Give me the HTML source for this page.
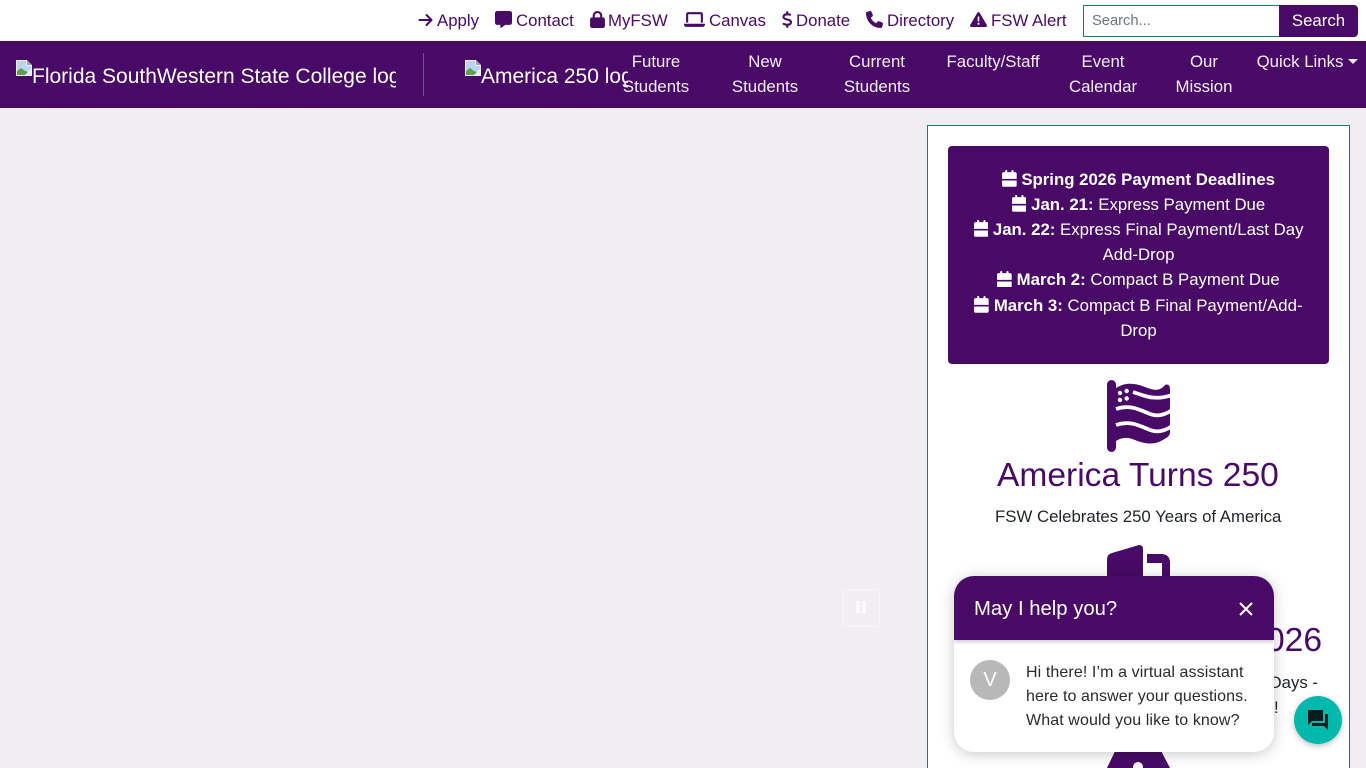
<!DOCTYPE html>
<html lang="en">
<head>
<meta charset="utf-8">
<title>Florida SouthWestern State College</title>
<style>
*{box-sizing:border-box}
html,body{margin:0;padding:0;width:1366px;height:768px;overflow:hidden;background:#f1edf3;font-family:"Liberation Sans",Arial,sans-serif;font-size:16.8px;line-height:25.2px;color:#212529}
#page{position:relative;width:1366px;height:768px;overflow:hidden;background:#f1edf3}
.a{position:absolute;white-space:nowrap}
#top{position:absolute;left:0;top:0;width:1366px;height:41px;background:#fff}
.tl{color:#480a66;top:8px;line-height:25px}
.ic{position:absolute;fill:#480a66}
#nav{position:absolute;left:0;top:41px;width:1366px;height:67px;background:#480a66}
.n{position:absolute;top:8px;color:#f5eefa;text-align:center;line-height:25.2px;white-space:nowrap;transform:translateX(-50%)}
.alt{position:absolute;top:22px;color:#fff;font-size:21px;line-height:28px;white-space:nowrap;overflow:hidden}
#panel{position:absolute;left:927px;top:125px;width:423px;height:643px;background:#fff;border:1px solid #1b7a6e;border-bottom:0}
#card{position:absolute;left:948px;top:146px;width:381px;height:218px;background:#480a66;border-radius:4px;color:#fff;text-align:center;padding:20.5px 20px 0}
#card svg{width:14.7px;height:16.8px;fill:#fff;vertical-align:-2px}
#card div{line-height:25.2px}
h2{position:absolute;margin:0;font-weight:400;font-size:33.6px;line-height:40px;color:#480a66;white-space:nowrap}
#chat{position:absolute;left:954px;top:576px;width:320px;height:176px;background:#fff;border-radius:20px;box-shadow:0 2px 14px rgba(0,0,0,.22);overflow:hidden}
#chead{position:absolute;left:0;top:0;width:320px;height:64px;background:#480a66;color:#fff;font-size:20.3px;line-height:66px;padding-left:20px;box-shadow:0 2px 4px rgba(0,0,0,.2)}
#av{position:absolute;left:16px;top:84px;width:40px;height:40px;border-radius:50%;background:#b8b8b8;color:#fff;text-align:center;line-height:40px;font-size:20px}
#msg{position:absolute;left:72px;top:85px;width:240px;font-size:16px;line-height:24px;color:#2a2a2a;letter-spacing:.1px;white-space:nowrap}
#fab{position:absolute;left:1294px;top:696px;width:48px;height:48px;border-radius:50%;background:#00b8ab;box-shadow:0 2px 6px rgba(0,0,0,.25)}
#pause{position:absolute;left:843px;top:589px;width:37px;height:38px;border:1px solid #f8f6f9;border-radius:3px}
</style>
</head>
<body>
<div id="page">
<div id="top">
  <svg class="ic" style="left:418px;top:12px;width:15px;height:16px" viewBox="0 0 448 512"><path d="M438.6 278.6c12.5-12.5 12.5-32.8 0-45.3l-160-160c-12.5-12.5-32.8-12.5-45.3 0s-12.5 32.8 0 45.3L338.8 224 32 224c-17.7 0-32 14.3-32 32s14.3 32 32 32l306.7 0L233.4 393.4c-12.5 12.5-12.5 32.8 0 45.3s32.8 12.5 45.3 0l160-160z"/></svg>
  <span class="a tl" style="left:437px">Apply</span>
  <svg class="ic" style="left:495px;top:11px;width:17px;height:17px" viewBox="0 0 512 512"><path d="M64 0C28.7 0 0 28.7 0 64V352c0 35.3 28.7 64 64 64h96v80c0 6.1 3.4 11.6 8.8 14.3s11.9 2.1 16.8-1.5L309.3 416H448c35.3 0 64-28.7 64-64V64c0-35.3-28.7-64-64-64H64z"/></svg>
  <span class="a tl" style="left:516px">Contact</span>
  <svg class="ic" style="left:590px;top:11px;width:15px;height:17px" viewBox="0 0 448 512"><path d="M144 144v48H304V144c0-44.2-35.8-80-80-80s-80 35.8-80 80zM80 192V144C80 64.5 144.5 0 224 0s144 64.5 144 144v48h16c35.3 0 64 28.7 64 64V448c0 35.3-28.7 64-64 64H64c-35.3 0-64-28.7-64-64V256c0-35.3 28.7-64 64-64H80z"/></svg>
  <span class="a tl" style="left:608px">MyFSW</span>
  <svg class="ic" style="left:684px;top:11px;width:21px;height:17px" viewBox="0 0 640 512"><path d="M128 32C92.7 32 64 60.7 64 96V352h64V96H512V352h64V96c0-35.3-28.7-64-64-64H128zM19.2 384C8.6 384 0 392.6 0 403.2C0 445.6 34.4 480 76.8 480H563.2c42.4 0 76.8-34.4 76.8-76.8c0-10.6-8.6-19.2-19.2-19.2H19.2z"/></svg>
  <span class="a tl" style="left:709px">Canvas</span>
  <svg class="ic" style="left:782px;top:11px;width:10.5px;height:17px" viewBox="0 0 320 512"><path d="M160 0c17.7 0 32 14.3 32 32V67.7c1.6 .2 3.1 .4 4.7 .7c10.6 1.6 42.1 6.7 55.1 10c17.1 4.3 27.5 21.7 23.2 38.9s-21.7 27.5-38.9 23.2c-9.3-2.4-37.6-7-48.9-8.7c-32.1-4.8-59.6-2.4-78.5 4.9c-18.3 7-25.9 16.9-27.9 28c-1.9 10.7-.5 16.7 1.2 20.4c1.8 3.9 5.5 8.3 12.8 13.2c16.3 10.7 41.3 17.7 73.7 26.3l2.9 .8c28.6 7.6 63.6 16.8 89.6 33.8c14.2 9.3 27.6 21.9 35.9 39.5c8.5 17.9 10.3 37.9 6.4 59.2c-6.9 38-33.1 63.4-65.6 76.7c-13.7 5.6-28.6 9.2-44.4 11V480c0 17.7-14.3 32-32 32s-32-14.3-32-32V445.1c-.4-.1-.9-.1-1.3-.2l-.2 0 0 0c-24.4-3.8-64.5-14.3-91.5-26.3c-16.1-7.2-23.4-26.1-16.2-42.2s26.1-23.4 42.2-16.2c20.9 9.3 55.3 18.5 75.2 21.6c31.9 4.7 58.2 2 76-5.3c16.9-6.9 24.6-16.9 26.8-28.9c1.9-10.6 .5-16.7-1.2-20.4c-1.9-4-5.6-8.4-13-13.3c-16.4-10.7-41.5-17.7-73.9-26.3l-2.8-.7 0 0C119.4 279.3 84.4 270 58.4 253c-14.2-9.3-27.5-22-35.8-39.6c-8.4-17.9-10.1-37.9-6.1-59.2C23.7 116 52.3 91.2 84.8 78.3c13.3-5.3 27.9-8.9 43.2-11V32c0-17.7 14.3-32 32-32z"/></svg>
  <span class="a tl" style="left:796px">Donate</span>
  <svg class="ic" style="left:866px;top:11px;width:17px;height:17px" viewBox="0 0 512 512"><path d="M164.9 24.6c-7.7-18.6-28-28.5-47.4-23.2l-88 24C12.1 30.2 0 46 0 64C0 311.4 200.6 512 448 512c18 0 33.8-12.1 38.6-29.5l24-88c5.3-19.4-4.6-39.7-23.2-47.4l-96-40c-16.3-6.8-35.2-2.1-46.3 11.6L304.7 368C234.3 334.7 177.3 277.7 144 207.3L193.3 167c13.7-11.2 18.4-30 11.6-46.3l-40-96z"/></svg>
  <span class="a tl" style="left:887px">Directory</span>
  <svg class="ic" style="left:970px;top:11px;width:17px;height:17px" viewBox="0 0 512 512"><path d="M256 32c14.2 0 27.3 7.5 34.5 19.8l216 368c7.3 12.4 7.3 27.7 .2 40.1S486.3 480 472 480H40c-14.3 0-27.6-7.7-34.7-20.1s-7-27.8 .2-40.1l216-368C228.7 39.5 241.8 32 256 32zm0 128c-13.3 0-24 10.7-24 24V296c0 13.3 10.7 24 24 24s24-10.7 24-24V184c0-13.3-10.7-24-24-24zm32 224a32 32 0 1 0 -64 0 32 32 0 1 0 64 0z"/></svg>
  <span class="a tl" style="left:991px">FSW Alert</span>
  <div class="a" style="left:1083px;top:5px;width:197px;height:32px;border:1px solid #1b7a6e;background:#fff;color:#6c757d;font-size:14.7px;line-height:31px;padding-left:8px">Search...</div>
  <div class="a" style="left:1279px;top:5px;width:79px;height:32px;background:#480a66;color:#fff;border-radius:0 4px 4px 0;text-align:center;line-height:31px">Search</div>
</div>

<div id="nav">
  <svg class="a" style="left:16px;top:19px" width="16" height="16" viewBox="0 0 16 16"><path d="M0 0h11l5 5v11H0z" fill="#e8eef4"/><path d="M11 0l5 5h-5z" fill="#9aa5b0"/><path d="M1 1h9v5h5v3L9 14H1z" fill="#bcd3f2"/><path d="M1 15v-4l4-3 4 3 3 1-3 3z" fill="#5fa04e"/></svg>
  <div class="alt" style="left:32px;width:364px">Florida SouthWestern State College logo</div>
  <div class="a" style="left:423px;top:12px;width:1px;height:43px;background:rgba(255,255,255,.28)"></div>
  <svg class="a" style="left:465px;top:19px" width="16" height="16" viewBox="0 0 16 16"><path d="M0 0h11l5 5v11H0z" fill="#e8eef4"/><path d="M11 0l5 5h-5z" fill="#9aa5b0"/><path d="M1 1h9v5h5v3L9 14H1z" fill="#bcd3f2"/><path d="M1 15v-4l4-3 4 3 3 1-3 3z" fill="#5fa04e"/></svg>
  <div class="alt" style="left:481px;width:147px">America 250 logo</div>
  <div class="n" style="left:656px">Future<br>Students</div>
  <div class="n" style="left:765px">New<br>Students</div>
  <div class="n" style="left:877px">Current<br>Students</div>
  <div class="n" style="left:993px">Faculty/Staff</div>
  <div class="n" style="left:1103px">Event<br>Calendar</div>
  <div class="n" style="left:1204px">Our<br>Mission</div>
  <div class="n" style="left:1300px">Quick Links</div>
  <div class="a" style="left:1348px;top:18px;width:0;height:0;border-left:5px solid transparent;border-right:5px solid transparent;border-top:5px solid #f5eefa"></div>
</div>

<div id="pause"><div class="a" style="left:12px;top:11px;width:4px;height:12px;background:#fbfafc"></div><div class="a" style="left:18px;top:11px;width:4px;height:12px;background:#fbfafc"></div></div>

<div id="panel"></div>

<svg width="0" height="0" style="position:absolute"><defs><path id="cal" d="M96 32V64H48C21.5 64 0 85.5 0 112V272H448V112c0-26.5-21.5-48-48-48H352V32c0-17.7-14.3-32-32-32s-32 14.3-32 32V64H160V32c0-17.7-14.3-32-32-32S96 14.3 96 32zM448 320H0V464c0 26.5 21.5 48 48 48H400c26.5 0 48-21.5 48-48V320z"/></defs></svg>

<div id="card">
  <div><svg viewBox="0 0 448 512"><use href="#cal"/></svg> <b>Spring 2026 Payment Deadlines</b></div>
  <div><svg viewBox="0 0 448 512"><use href="#cal"/></svg> <b>Jan. 21:</b> Express Payment Due</div>
  <div><svg viewBox="0 0 448 512"><use href="#cal"/></svg> <b>Jan. 22:</b> Express Final Payment/Last Day<br>Add-Drop</div>
  <div><svg viewBox="0 0 448 512"><use href="#cal"/></svg> <b>March 2:</b> Compact B Payment Due</div>
  <div><svg viewBox="0 0 448 512"><use href="#cal"/></svg> <b>March 3:</b> Compact B Final Payment/Add-<br>Drop</div>
</div>

<svg class="a" style="left:0;top:0;pointer-events:none" width="1366" height="768" viewBox="0 0 1366 768">
  <rect x="1107" y="380" width="9" height="72" rx="4.5" fill="#480a66"/>
  <path d="M1116 388C1125 382 1135 383 1145 387C1155 391 1160 391 1165 385Q1170 383 1170 390V432Q1170 436 1166 438C1155 446 1145 444 1135 440C1128 437 1122 437 1116 441Z" fill="#480a66"/>
  <g fill="none" stroke="#fff" stroke-width="3.8">
    <path d="M1133 392C1145 396 1155 401 1172 395"/>
    <path d="M1116 409C1130 404 1140 410 1150 414C1158 417 1165 415 1172 410"/>
    <path d="M1116 425C1130 420 1140 426 1150 430C1158 433 1165 431 1172 426"/>
  </g>
  <g fill="#fff"><circle cx="1120" cy="393" r="2.2"/><circle cx="1126.7" cy="391" r="2.2"/><circle cx="1120" cy="400" r="2.2"/><circle cx="1126.7" cy="398.5" r="2.2"/></g>
  <path d="M1107 560Q1107 554 1112 553L1139 545Q1143 545 1143 549V590H1107Z" fill="#480a66"/>
  <path d="M1147 554H1161Q1170 554 1170 563V590H1162V563H1147Z" fill="#480a66"/>
  <path d="M1107 768L1118 745H1158L1170 768Z" fill="#480a66"/>
  <circle cx="1138" cy="767" r="5" fill="#fff"/>
</svg>

<h2 style="left:997px;top:456px">America Turns 250</h2>
<div class="a" style="left:995px;top:504px;color:#212529">FSW Celebrates 250 Years of America</div>
<h2 style="right:44px;top:621px">2026</h2>
<div class="a" style="right:48px;top:670px;color:#212529">Days -</div>
<div class="a" style="left:1274px;top:695px;color:#212529">!</div>

<div id="chat">
  <div id="chead">May I help you?
    <svg class="a" style="left:284px;top:25px" width="16" height="16" viewBox="0 0 16 16"><path d="M2 2L14 14M14 2L2 14" stroke="#fff" stroke-width="2" fill="none"/></svg>
  </div>
  <div id="av">V</div>
  <div id="msg">Hi there! I’m a virtual assistant<br>here to answer your questions.<br>What would you like to know?</div>
</div>
<div id="fab"><svg class="a" style="left:12px;top:12px" width="24" height="24" viewBox="0 0 24 24" fill="#0b1c20"><path d="M22 6h-3v9H6v3h12l4 4zM17 12V2H2v15l4-4h11z"/></svg></div>
</div>
</body>
</html>
